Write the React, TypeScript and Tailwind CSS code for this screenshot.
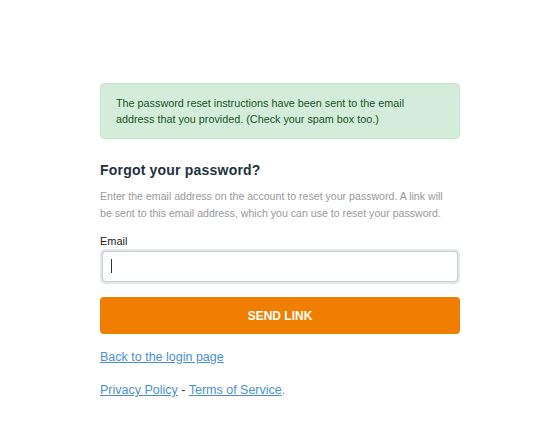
export default function App() {
  return (
    <div className="min-h-[424px] w-full bg-white font-['Liberation_Sans',Arial,sans-serif]">
      <div className="ml-[100px] w-[360px] pt-[83px]">
        <div className="rounded-[4px] border border-[#c3e6cb] bg-[#d4edda] px-[15px] pt-[11px] pb-[11px] text-[10.8px] leading-[16px] text-[#155724]">
          The password reset instructions have been sent to the email address that you provided. (Check your spam box too.)
        </div>

        <h2 className="mt-[22px] text-[14px] font-bold leading-[18px] tracking-[0.2px] text-[#22313f]">
          Forgot your password?
        </h2>
        <p className="mt-[9px] pr-[10px] text-[10.6px] leading-[17px] text-[#999]">
          Enter the email address on the account to reset your password. A link will be sent to this email address, which you can use to reset your password.
        </p>

        <label className="mt-[12px] block text-[11px] leading-[14px] text-[#222]">Email</label>
        <div className="relative mt-[1px] rounded-[5px] bg-[#e3e7eb] p-[2px]">
          <input
            type="text"
            autoFocus
            className="block h-[31px] w-full rounded-[4px] border border-[#c8cdd2] bg-white px-[9px] text-[12px] text-[#333] caret-[#333] outline-none"
          />
          <span className="pointer-events-none absolute left-[11px] top-[10px] h-[14px] w-px bg-[#333]" />
        </div>

        <button
          type="button"
          className="mt-[13px] flex h-[37px] w-full items-center justify-center rounded-[4px] bg-[#f07f00] text-[12px] font-bold text-white"
        >
          SEND LINK
        </button>

        <div className="mt-[15px] text-[12.5px] leading-[16px]">
          <a href="#" className="text-[#4a8fd6] underline">Back to the login page</a>
        </div>
        <div className="mt-[17px] text-[12.5px] leading-[16px] text-[#333]">
          <a href="#" className="text-[#4a8fd6] underline">Privacy Policy</a> -{" "}
          <a href="#" className="text-[#4a8fd6] underline">Terms of Service</a>
          <span className="text-[#4a8fd6]">.</span>
        </div>
      </div>
    </div>
  );
}
